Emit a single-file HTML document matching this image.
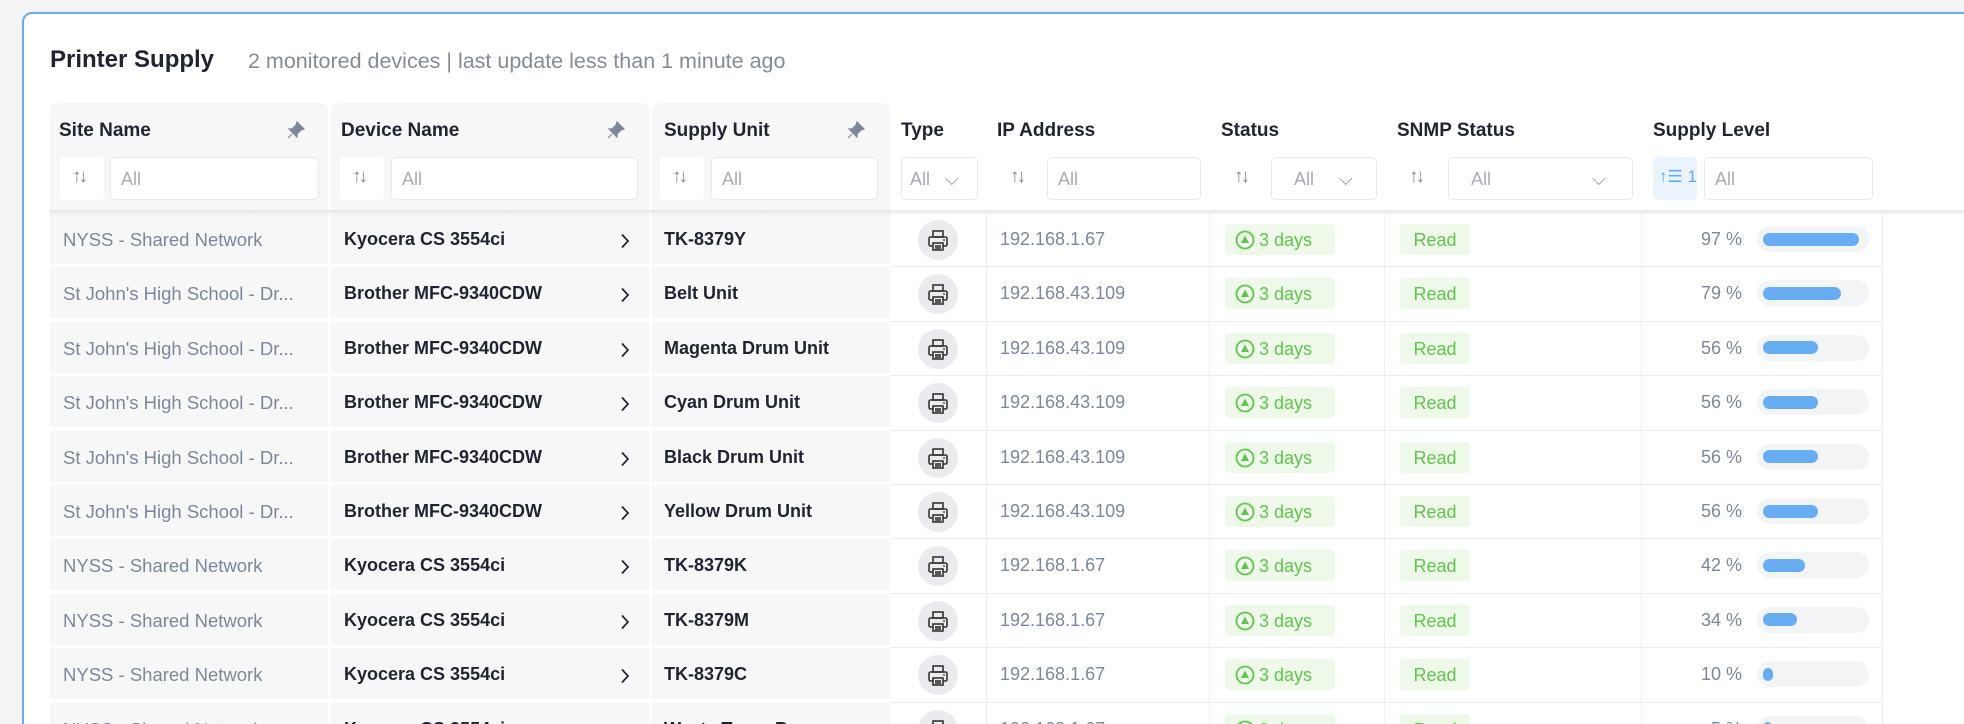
<!DOCTYPE html>
<html><head><meta charset="utf-8"><style>
*{box-sizing:border-box;margin:0;padding:0}
html,body{width:1964px;height:724px;overflow:hidden}
body{background:#f4f4f5;font-family:"Liberation Sans",Arial,sans-serif;position:relative}
.card{position:absolute;left:22px;top:12px;width:2100px;height:740px;background:#fff;border:2.5px solid #6aabf2;border-radius:10px}
.a{position:absolute}
.title{left:50px;top:46px;font-size:24px;font-weight:bold;color:#1f2430}
.sub{left:248px;top:49px;font-size:21.5px;color:#858b95}
.hc{position:absolute;top:103px;height:110px;background:#f7f7f7;border-radius:8px 8px 0 0}
.ht{position:absolute;top:120px;font-size:19px;font-weight:bold;color:#1f2430}
.inp{position:absolute;top:157px;height:43px;background:#fff;border:1px solid #e6e8eb;border-radius:5px;font-size:18px;color:#a9adb3;padding:11px 10px}
.sb{position:absolute;top:157px;height:43px;width:45px;background:#fff;border-radius:5px}
.sic{position:absolute;font-size:19px;color:#7d8898;top:166px;letter-spacing:-3px}
.shadow{position:absolute;left:50px;top:210px;width:1930px;height:6px;background:linear-gradient(#e6e6e6,rgba(255,255,255,0))}
.row{position:absolute;left:50px;width:1833px;height:54.4px}
.p{position:absolute;top:0;height:51px;background:#f7f7f7}
.c{position:absolute;top:0;height:54.4px;border-bottom:1.5px solid #ececec;border-right:1px solid #efefef;background:#fff}
.t{position:absolute;top:16px;font-size:18px;white-space:nowrap}
.site{color:#7b879a;font-size:18.5px}
.dev{color:#1f2430;font-weight:bold}
.ip{color:#7b879a}
.ic{position:absolute;left:868px;top:7px;width:40px;height:40px;border-radius:50%;background:#e9ebee}
.badge{position:absolute;top:11px;height:31px;background:#eef9ea;border-radius:4px;color:#5ec64b;font-size:18px;padding:6px 0 0 0}
.track{position:absolute;left:1707px;top:13px;width:112px;height:26px;border-radius:13px;background:#f3f4f5}
.fill{position:absolute;left:6px;top:6.5px;height:13px;border-radius:7px;background:#67adf6}
.pct{position:absolute;right:141px;top:16px;font-size:18px;color:#7b879a}
</style></head><body>
<div class="card"></div>
<div class="a title">Printer Supply</div>
<div class="a sub">2 monitored devices | last update less than 1 minute ago</div>

<div class="hc" style="left:50px;width:278px"></div>
<div class="hc" style="left:331px;width:318px"></div>
<div class="hc" style="left:652px;width:238px"></div>

<div class="ht" style="left:59px">Site Name</div>
<div class="ht" style="left:341px">Device Name</div>
<div class="ht" style="left:664px">Supply Unit</div>
<div class="ht" style="left:901px">Type</div>
<div class="ht" style="left:997px">IP Address</div>
<div class="ht" style="left:1221px">Status</div>
<div class="ht" style="left:1397px">SNMP Status</div>
<div class="ht" style="left:1653px">Supply Level</div>

<svg class="a" style="left:286px;top:120px" width="20" height="20" viewBox="0 0 20 20"><path d="M11 2 L18 9 L15 10 L11 14 L11 17 L3 9 L6 9 L10 5 Z M6 14 L2 18" fill="#7d8898" stroke="#7d8898" stroke-width="1.2"/></svg>
<svg class="a" style="left:606px;top:120px" width="20" height="20" viewBox="0 0 20 20"><path d="M11 2 L18 9 L15 10 L11 14 L11 17 L3 9 L6 9 L10 5 Z M6 14 L2 18" fill="#7d8898" stroke="#7d8898" stroke-width="1.2"/></svg>
<svg class="a" style="left:846px;top:120px" width="20" height="20" viewBox="0 0 20 20"><path d="M11 2 L18 9 L15 10 L11 14 L11 17 L3 9 L6 9 L10 5 Z M6 14 L2 18" fill="#7d8898" stroke="#7d8898" stroke-width="1.2"/></svg>

<div class="sb" style="left:59px"></div><div class="sic" style="left:72px">↑↓</div>
<div class="inp" style="left:110px;width:209px">All</div>
<div class="sb" style="left:339px"></div><div class="sic" style="left:352px">↑↓</div>
<div class="inp" style="left:391px;width:247px">All</div>
<div class="sb" style="left:659px"></div><div class="sic" style="left:672px">↑↓</div>
<div class="inp" style="left:711px;width:167px">All</div>
<div class="inp" style="left:901px;width:77px;padding-left:8px">All <span style="margin-left:10px;color:#8a929e">⌵</span></div>
<div class="sic" style="left:1010px">↑↓</div>
<div class="inp" style="left:1047px;width:154px">All</div>
<div class="sic" style="left:1234px">↑↓</div>
<div class="inp" style="left:1271px;width:106px;padding-left:22px">All <span style="margin-left:20px;color:#8a929e">⌵</span></div>
<div class="sic" style="left:1409px">↑↓</div>
<div class="inp" style="left:1448px;width:185px;padding-left:22px">All <span style="margin-left:96px;color:#8a929e">⌵</span></div>
<div class="sb" style="left:1653px;background:#eaf4ff;width:44px"></div><div class="a" style="left:1659px;top:167px;font-size:17px;color:#5fa8f5">↑☰ 1</div>
<div class="inp" style="left:1704px;width:169px">All</div>

<div id="rows"></div>
<div class="shadow"></div>

<script>
var data=[
["NYSS - Shared Network","Kyocera CS 3554ci","TK-8379Y","192.168.1.67",97],
["St John's High School - Dr...","Brother MFC-9340CDW","Belt Unit","192.168.43.109",79],
["St John's High School - Dr...","Brother MFC-9340CDW","Magenta Drum Unit","192.168.43.109",56],
["St John's High School - Dr...","Brother MFC-9340CDW","Cyan Drum Unit","192.168.43.109",56],
["St John's High School - Dr...","Brother MFC-9340CDW","Black Drum Unit","192.168.43.109",56],
["St John's High School - Dr...","Brother MFC-9340CDW","Yellow Drum Unit","192.168.43.109",56],
["NYSS - Shared Network","Kyocera CS 3554ci","TK-8379K","192.168.1.67",42],
["NYSS - Shared Network","Kyocera CS 3554ci","TK-8379M","192.168.1.67",34],
["NYSS - Shared Network","Kyocera CS 3554ci","TK-8379C","192.168.1.67",10],
["NYSS - Shared Network","Kyocera CS 3554ci","Waste Toner Box","192.168.1.67",5]];
var h="";
var printer='<svg width="40" height="40" viewBox="0 0 40 40"><g fill="none" stroke="#333" stroke-width="1.6"><rect x="15" y="11" width="10" height="6"/><rect x="11" y="17" width="18" height="9" rx="1.5"/><rect x="15" y="23" width="10" height="7" fill="#e9ebee"/><line x1="17" y1="26" x2="23" y2="26"/><line x1="17" y1="28" x2="23" y2="28"/></g><circle cx="26" cy="20" r="0.9" fill="#333"/></svg>';
data.forEach(function(d,i){
var top=213+i*54.4;
h+='<div class="row" style="top:'+top+'px">'+
'<div class="p" style="left:0;width:278px"></div><div class="p" style="left:281px;width:318px"></div><div class="p" style="left:602px;width:238px"></div>'+
'<div class="c" style="left:840px;width:97px;border-right:1px solid #eee"></div><div class="c" style="left:937px;width:223px"></div><div class="c" style="left:1160px;width:175px"></div><div class="c" style="left:1335px;width:257px"></div><div class="c" style="left:1592px;width:241px"></div>'+
'<div class="t site" style="left:13px">'+d[0]+'</div>'+
'<div class="t dev" style="left:294px">'+d[1]+'</div>'+
'<svg style="position:absolute;left:570px;top:20px" width="10" height="16" viewBox="0 0 10 16"><path d="M2 1.5 L8 8 L2 14.5" fill="none" stroke="#1f2430" stroke-width="1.7"/></svg>'+
'<div class="t dev" style="left:614px">'+d[2]+'</div>'+
'<div class="ic">'+printer+'</div>'+
'<div class="t ip" style="left:950px">'+d[3]+'</div>'+
'<div class="badge" style="left:1175px;width:110px"><svg style="position:absolute;left:10px;top:6px" width="20" height="20" viewBox="0 0 20 20"><circle cx="10" cy="10" r="8.5" fill="none" stroke="#5ec64b" stroke-width="1.8"/><path d="M10 5.5 L14 13 L6 13Z" fill="#5ec64b"/></svg><span style="position:absolute;left:34px;top:6px">3 days</span></div>'+
'<div class="badge" style="left:1350px;width:70px;text-align:center">Read</div>'+
'<div class="pct">'+d[4]+' %</div>'+
'<div class="track"><div class="fill" style="width:'+Math.max(9,Math.round(d[4]*0.99))+'px"></div></div>'+
'</div>';
});
document.getElementById('rows').innerHTML=h;
</script>
</body></html>
